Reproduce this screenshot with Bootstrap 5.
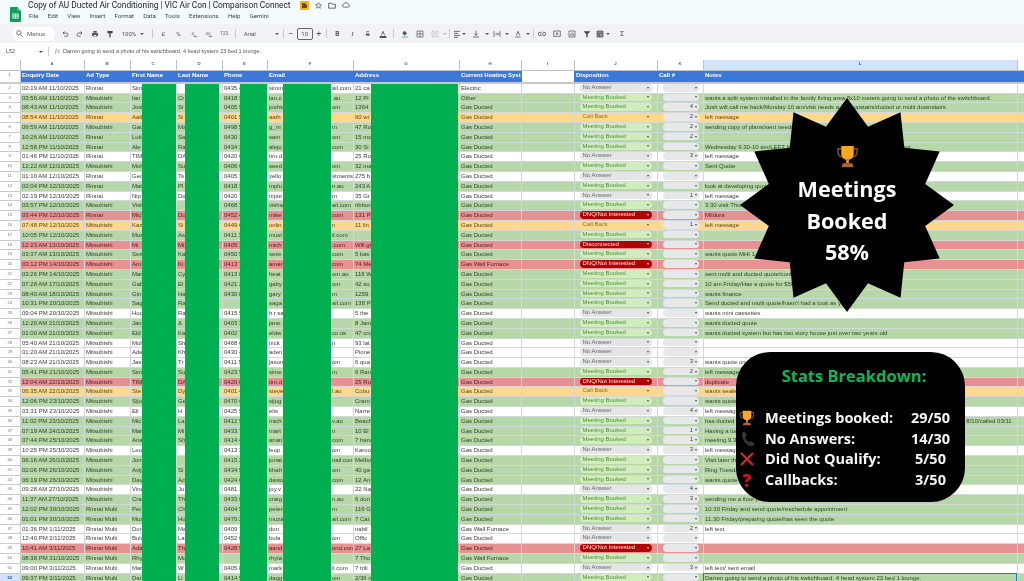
<!DOCTYPE html>
<html lang="en">
<head>
  <meta charset="UTF-8">
  <meta name="viewport" content="width=device-width, initial-scale=1.0">
  <title>Copy of AU Ducted Air Conditioning</title>
  <link href="https://cdn.jsdelivr.net/npm/bootstrap@5.3.3/dist/css/bootstrap.min.css" rel="stylesheet">
  <style>
    html, body { height: 581px; overflow: hidden; }
    body { background: #f4fbfc; font-family: "Liberation Sans", Arial, sans-serif; color: #222; }
    .shot { position: relative; width: 1024px; height: 581px; overflow: hidden; }
    .blurred { filter: blur(.5px); }

    /* title area */
    .top-bar { height: 24px; }
    .logo-box { width: 28px; padding: 2px 0 0 10px; }
    .doc-title { font: 400 8.3px/10px Roboto, sans-serif; color: #1f1f1f; margin-top: 0; white-space: nowrap; }
    .doc-icons { margin-left: 9px; gap: 6px; }
    .menu-row { font: 400 6.1px/8px Roboto, sans-serif; color: #444; margin-top: 2px; gap: 9.2px; padding-left: 1px; }

    /* toolbar */
    .tool-bar { height: 19px; background: #f0f2f5; padding-left: 12px; font: 400 6px/8px Roboto, sans-serif; color: #555; white-space: nowrap; }
    .menus-pill { width: 43px; height: 14px; background: #fff; border-radius: 7px; padding-left: 4px; gap: 4px; margin-right: 2px; color: #666; }
    .tb { width: 15.2px; flex: none; display: flex; justify-content: center; align-items: center; }
    .tb svg { width: 8px; height: 8px; }
    .tb-w { flex: none; display: flex; align-items: center; }
    .tb-sep { width: 1px; height: 9px; background: #c7c9cc; flex: none; margin: 0 3px; }
    .caret { width: 0; height: 0; border: 2px solid transparent; border-top: 2.5px solid #555; border-bottom: 0; flex: none; }
    .size-box { width: 16px; height: 12px; border: 1px solid #666; border-radius: 2px; text-align: center; line-height: 10px; margin: 0 2px; flex: none; }

    /* formula bar */
    .formula-bar { height: 17px; background: #fff; font: 400 5.5px/17px "Liberation Sans", sans-serif; color: #555; white-space: nowrap; }
    .cell-ref { width: 45px; padding-left: 6px; padding-right: 2px; }
    .fx { color: #888; font-style: italic; font-family: "Liberation Serif", serif; font-size: 7px; margin: 4px 3px 0 3px; border-left: 1px solid #ccc; padding-left: 6px; line-height: 9px; height: 9px; }

    /* sheet */
    .sheet-wrap { position: relative; background: #fff; height: 521px; overflow: hidden; }
    .table.sheet { table-layout: fixed; width: 1024px; margin: 0; border-collapse: collapse; font: 400 6px/9px "Liberation Sans", sans-serif; --bs-table-color: #333; --bs-table-bg: #fff; --bs-table-border-color: #d9dcdc; }
    .table.sheet > :not(caption) > * > * { padding: 0 1.5px; height: 9.8px; border: 1px solid #d5d8d8; border-width: 0 1px 1px 0; overflow: hidden; white-space: nowrap; color: inherit; line-height: 8.6px; }
    .table.sheet > :not(caption) > tr.col-heads > * { height: 10.6px; font-size: 4.4px; color: #666; text-align: center; background: #fff; border-color: #bfc3c4; }
    .table.sheet > :not(caption) > tr.col-heads > .on { background: #d3e3fd; color: #0b57d0; }
    .table.sheet > :not(caption) > tr.head-row > * { height: 12.4px; background: #3c78d8; color: #fff; font-weight: 700; border-color: #3c78d8; border-bottom: 2px solid #c6c9cb; border-top: 1px dashed #dfe8f7; padding-bottom: 1px; }
    .table.sheet > :not(caption) > tr.head-row > .gap-cell { background: #fff; border-top: 1px dashed #555; }
    .table.sheet > :not(caption) > tr > .num { background: #fff; font-size: 4.2px; color: #777; text-align: center; border-color: #c9cccd; padding: 0; }
    .table.sheet > :not(caption) > tr.head-row > .num { background: #fff; color: #777; font-weight: 400; border-color: #c9cccd; }
    .table.sheet > :not(caption) > tr > .num.on { background: #d3e3fd; color: #0b57d0; font-weight: 700; }
    .table.sheet > :not(caption) > tr > .picked { outline: 1.5px solid #1a73e8; outline-offset: -1px; }
    tr.st-m { --bs-table-bg: #b6d7a8; color: #2f4527; }
    tr.st-c { --bs-table-bg: #fdd98d; color: #5c4718; }
    tr.st-d { --bs-table-bg: #e69292; color: #552222; }
    tr.st-n { --bs-table-bg: #fff; color: #3c3c3c; }
    .table.sheet td.rt { text-align: right; }
    .frag { display: inline-block; width: 63px; }
    .far-note { margin-left: 232px; }

    .pill { display: flex; align-items: center; justify-content: space-between; height: 7.6px; border-radius: 4px; font-size: 6px; line-height: 7.6px; padding: 0 3px 0 3px; }
    .pill::after { content: ""; width: 0; height: 0; border: 1.7px solid transparent; border-top: 2px solid #444; border-bottom: 0; flex: none; }
    .disp { margin: 0 3px 0 3.5px; padding-left: 3px; }
    .disp-m { background: #d2edbd; color: #4f9040; }
    .disp-n { background: #e4e5e7; color: #666; }
    .disp-c { background: #fdd98d; color: #96702a; }
    .disp-d, .disp-x { background: #b10202; color: #fde3e3; }
    .disp-d::after, .disp-x::after { border-top-color: #fff; }
    .call { margin: 0 2px 0 3.5px; background: #e6e8ea; color: #444; padding-right: 2px; }
    .call span { margin-left: auto; margin-right: 2px; }

    /* redaction bars */
    .hide-bar { position: absolute; top: 23.5px; bottom: 0; background: #00b050; }
    .hb-1 { left: 142px; width: 34px; }
    .hb-2 { left: 185px; width: 34px; }
    .hb-3 { left: 240px; width: 27px; }
    .hb-4 { left: 283px; width: 48px; }
    .hb-5 { left: 371px; width: 87px; }

    /* overlays */
    .burst { position: absolute; left: 740px; top: 98px; width: 214px; height: 214px; color: #fff; font: 700 21.6px/31.6px "Open Sans", sans-serif; text-align: center; padding-top: 47px; filter: blur(.25px); }
    .burst > svg.shape { position: absolute; inset: 0; width: 214px; height: 214px; }
    .burst > div { position: relative; }
    .burst .cup { display: block; position: relative; margin: 0 auto 5px; width: 23px; height: 23px; }
    .stats-panel { position: absolute; left: 736px; top: 352px; width: 229px; height: 150px; background: #000; border-radius: 34px; color: #f5f5f5; font: 700 14.5px/20.6px "Open Sans", sans-serif; padding: 11px 0 0 3px; filter: blur(.25px); }
    .stats-title { color: #10b35a; font-size: 16.500px; line-height: 26px; text-align: center; margin-bottom: 19px; padding-left: 4px; }
    .stat-row { display: grid; grid-template-columns: 26px 138px 55px; align-items: center; white-space: nowrap; }
    .stat-row > :last-child { text-align: center; }
    .stat-ico { display: flex; justify-content: center; width: 16px; }
    .stat-ico svg { width: 16px; height: 16px; }
    .qmark { color: #c8102e; font-weight: 800; font-size: 18px; }
  </style>
</head>
<body>
<div class="shot">
  <div class="blurred">
    <div class="top-bar d-flex">
      <div class="logo-box">
        <svg width="11" height="15" viewBox="0 0 11 15"><path d="M1 0h6.500L11 3.500V14a1 1 0 0 1-1 1H1a1 1 0 0 1-1-1V1a1 1 0 0 1 1-1z" fill="#0f9d58"/><path d="M7.500 0L11 3.500H8a.5.5 0 0 1-.5-.5z" fill="#87ceac"/><path d="M2.500 6.500h6v5h-6z M3.300 7.300v1.300h1.800V7.300z M5.900 7.300v1.300h1.800V7.300z M3.300 9.400v1.300h1.800V9.400z M5.900 9.400v1.300h1.800V9.400z" fill="#fff" fill-rule="evenodd"/></svg>
      </div>
      <div>
        <div class="d-flex align-items-center">
          <div class="doc-title">Copy of AU Ducted Air Conditioning | VIC Air Con | Comparison Connect</div>
          <div class="doc-icons d-flex align-items-center">
            <svg width="9" height="9" viewBox="0 0 9 9"><rect width="9" height="9" rx="1" fill="#f4b400"/><path d="M2 2h3l2 2.500V7H2z" fill="#5f4a10"/></svg>
            <svg width="7" height="7" viewBox="0 0 24 24"><path d="M12 2l3 7 7 .6-5.400 4.700 1.700 7.200L12 17.600l-6.300 3.900 1.700-7.200L2 9.600 9 9z" fill="none" stroke="#555" stroke-width="2.400"/></svg>
            <svg width="8" height="7" viewBox="0 0 24 20"><path d="M2 3h8l2 3h10v12H2z" fill="none" stroke="#555" stroke-width="2.600"/></svg>
            <svg width="8" height="6" viewBox="0 0 24 17"><path d="M6 15a4.500 4.500 0 0 1-.5-9A7 7 0 0 1 19 6.500 4.300 4.300 0 0 1 19 15z" fill="none" stroke="#555" stroke-width="2.400"/></svg>
          </div>
        </div>
        <div class="menu-row d-flex"><span>File</span><span>Edit</span><span>View</span><span>Insert</span><span>Format</span><span>Data</span><span>Tools</span><span>Extensions</span><span>Help</span><span>Gemini</span></div>
      </div>
    </div>

    <div class="tool-bar d-flex align-items-center">
      <div class="menus-pill d-flex align-items-center">
        <svg width="7" height="7" viewBox="0 0 10 10"><circle cx="4" cy="4" r="3" fill="none" stroke="#555" stroke-width="1.100"/><path d="M6.300 6.300L9.500 9.500" stroke="#555" stroke-width="1.200"/></svg>
        <span>Menus</span>
      </div>
      <div class="tb"><svg viewBox="0 0 12 12"><path d="M3 4.500h5a2.500 2.500 0 0 1 0 5H5M3 4.500L5.200 2.300M3 4.500l2.200 2.200" fill="none" stroke="#444" stroke-width="1.100"/></svg></div>
      <div class="tb"><svg viewBox="0 0 12 12"><path d="M9 4.500H4a2.500 2.500 0 0 0 0 5h3M9 4.500L6.800 2.300M9 4.500L6.800 6.700" fill="none" stroke="#444" stroke-width="1.100"/></svg></div>
      <div class="tb"><svg viewBox="0 0 12 12"><path d="M3.500 1.500h5v2.500h-5zM1.500 4.500h9v4.500h-2v1.500h-5V9h-2z" fill="#555"/><path d="M4 7.500h4v2.500H4z" fill="#eee"/></svg></div>
      <div class="tb"><svg viewBox="0 0 12 12"><path d="M2 1.500h8v3.500H2zM5 5h2v6H5z" fill="#444"/></svg></div>
      <div class="tb-w" style="width:31px;padding-left:4px;gap:4px"><span>100%</span><i class="caret"></i></div>
      <i class="tb-sep"></i>
      <div class="tb"><span>£</span></div>
      <div class="tb"><span>%</span></div>
      <div class="tb"><svg viewBox="0 0 12 12"><text x="1" y="7" font-size="6.500" font-family="Liberation Sans" fill="#555">.0</text><path d="M6 9.500h5M7.500 8l-1.500 1.500L7.500 11" fill="none" stroke="#555" stroke-width=".9"/></svg></div>
      <div class="tb"><svg viewBox="0 0 12 12"><text x="0" y="7" font-size="6" font-family="Liberation Sans" fill="#555">.00</text><path d="M5 9.500h5M8.500 8l1.500 1.500L8.500 11" fill="none" stroke="#555" stroke-width=".9"/></svg></div>
      <div class="tb"><span style="font-size:4.600px">123</span></div>
      <i class="tb-sep"></i>
      <div class="tb-w" style="width:41px;padding-left:5px;justify-content:space-between;padding-right:1px"><span>Arial</span><i class="caret"></i></div>
      <i class="tb-sep"></i>
      <div class="tb-w" style="font-size:9px;width:8px;justify-content:center">−</div>
      <div class="size-box">10</div>
      <div class="tb-w" style="font-size:9px;width:8px;justify-content:center">+</div>
      <i class="tb-sep"></i>
      <div class="tb" style="font-weight:700;font-size:6.500px">B</div>
      <div class="tb" style="font-style:italic;font-family:'Liberation Serif',serif;font-size:7px">I</div>
      <div class="tb" style="text-decoration:line-through;font-size:6.500px">S</div>
      <div class="tb"><svg viewBox="0 0 12 12"><path d="M3.500 8L6 2l2.500 6" fill="none" stroke="#444" stroke-width="1.100"/><rect x="1" y="9.500" width="10" height="2" fill="#000"/></svg></div>
      <i class="tb-sep"></i>
      <div class="tb"><svg viewBox="0 0 12 12"><path d="M5 1l4 4-3.500 3.500L2 5z" fill="#555"/><rect x="1" y="9.500" width="10" height="2" fill="#8fc99b"/></svg></div>
      <div class="tb"><svg viewBox="0 0 12 12"><path d="M1.500 1.500h9v9h-9zM6 1.500v9M1.500 6h9" fill="none" stroke="#555" stroke-width="1"/></svg></div>
      <div class="tb"><svg viewBox="0 0 12 12"><path d="M1.500 1.500h3v9h-3zM7.500 1.500h3v9h-3z" fill="none" stroke="#bbb" stroke-width="1"/></svg></div>
      <i class="caret" style="border-top-color:#bbb;margin-right:1px"></i>
      <i class="tb-sep" style="margin:0 1px"></i>
      <div class="tb" style="width:11px"><svg viewBox="0 0 12 12"><path d="M1.500 2h9M1.500 5h6M1.500 8h9M1.500 11h6" stroke="#444" stroke-width="1.200"/></svg></div><i class="caret"></i>
      <div class="tb" style="width:19px"><svg viewBox="0 0 12 12"><path d="M6 1v7M3.500 5.500L6 8l2.500-2.500M1.500 10.500h9" fill="none" stroke="#444" stroke-width="1.100"/></svg></div><i class="caret"></i>
      <div class="tb" style="width:16px"><svg viewBox="0 0 12 12"><path d="M1.500 1.500v9M10.500 1.500v9M3.500 6h5M6.500 4l2 2-2 2" fill="none" stroke="#444" stroke-width="1"/></svg></div><i class="caret"></i>
      <div class="tb" style="width:17px"><svg viewBox="0 0 12 12"><path d="M3.500 8L6 2l2.500 6M2 10.500h8" fill="none" stroke="#444" stroke-width="1.100"/></svg></div><i class="caret"></i>
      <i class="tb-sep" style="margin:0 0 0 3px"></i>
      <div class="tb"><svg viewBox="0 0 12 12"><path d="M5 3.500H3a2.500 2.500 0 0 0 0 5h2M7 3.500h2a2.500 2.500 0 0 1 0 5H7M3.500 6h5" fill="none" stroke="#444" stroke-width="1.100"/></svg></div>
      <div class="tb"><svg viewBox="0 0 12 12"><path d="M1 1.500h10v8H1zM6 3.500v4M4 5.500h4" fill="none" stroke="#444" stroke-width="1"/></svg></div>
      <div class="tb"><svg viewBox="0 0 12 12"><path d="M1.500 1.500h9v9h-9zM4 8.500V6M6 8.500v-5M8 8.500V5" fill="none" stroke="#444" stroke-width="1"/></svg></div>
      <div class="tb"><svg viewBox="0 0 12 12"><path d="M1 2h10L7 6.500V11H5V6.500z" fill="#444"/></svg></div>
      <div class="tb" style="width:11px"><svg viewBox="0 0 12 12"><path d="M1.500 1.500h9v9h-9zM1.500 5h9M5 5v5.500" fill="#999" stroke="#444" stroke-width="1"/></svg></div><i class="caret"></i>
      <div class="tb" style="margin-left:5px"><span style="font-size:8px">Σ</span></div>
    </div>

    <div class="formula-bar d-flex">
      <div class="cell-ref d-flex justify-content-between align-items-center"><span>L52</span><i class="caret"></i></div>
      <span class="fx">fx</span>
      <span>Darren going to send a photo of his switchboard. 4 head system 23 bed 1 lounge.</span>
    </div>

    <div class="sheet-wrap">
      <table class="table sheet">
        <colgroup>
          <col style="width:20px"><col style="width:64px"><col style="width:46px"><col style="width:46px"><col style="width:46px"><col style="width:45px"><col style="width:86px"><col style="width:106px"><col style="width:62px"><col style="width:53px"><col style="width:83px"><col style="width:46px"><col style="width:314px"><col style="width:7px">
        </colgroup>
        <tbody id="sheetBody">
          <tr class="col-heads"><th></th><th>A</th><th>B</th><th>C</th><th>D</th><th>E</th><th>F</th><th>G</th><th>H</th><th>I</th><th>J</th><th>K</th><th class="on">L</th><th></th></tr>
          <tr class="head-row"><th class="num">1</th><th>Enquiry Date</th><th>Ad Type</th><th>First Name</th><th>Last Name</th><th>Phone</th><th>Email</th><th>Address</th><th>Current Heating Syst</th><th class="gap-cell"></th><th>Disposition</th><th>Call #</th><th>Notes</th><th></th></tr>
        </tbody>
      </table>
      <div class="hide-bar hb-1"></div>
      <div class="hide-bar hb-2"></div>
      <div class="hide-bar hb-3"></div>
      <div class="hide-bar hb-4"></div>
      <div class="hide-bar hb-5"></div>
    </div>
  </div>

  <div class="burst">
    <svg class="shape" viewBox="0 0 214 214"><polygon fill="#000" points="107,0 128,28.800 160.500,14.300 164.300,49.700 199.700,53.500 185.200,86 214,107 185.200,128 199.700,160.500 164.300,164.300 160.500,199.700 128,185.200 107,214 86,185.200 53.500,199.700 49.700,164.300 14.300,160.500 28.800,128 0,107 28.800,86 14.300,53.500 49.700,49.700 53.500,14.300 86,28.800"/></svg>
    <svg class="cup" viewBox="0 0 24 24"><path d="M6 4H2v3c0 3 2 5 5 5.500M18 4h4v3c0 3-2 5-5 5.500" fill="none" stroke="#6b4a12" stroke-width="1.800"/><path d="M5.500 1h13v8c0 4-3 6.500-6.500 6.500S5.500 13 5.500 9z" fill="#f7a823"/><rect x="10.500" y="15" width="3" height="4" fill="#d98a1c"/><path d="M7 19h10l1 4H6z" fill="#b5622d"/></svg>
    <div>Meetings<br>Booked<br>58%</div>
  </div>

  <div class="stats-panel">
    <div class="stats-title">Stats Breakdown:</div>
    <div class="stat-row">
      <span class="stat-ico"><svg viewBox="0 0 24 24"><path d="M6 4H2v3c0 3 2 5 5 5.500M18 4h4v3c0 3-2 5-5 5.500" fill="none" stroke="#6b4a12" stroke-width="1.800"/><path d="M5.500 1h13v8c0 4-3 6.500-6.500 6.500S5.500 13 5.500 9z" fill="#f7a823"/><rect x="10.500" y="15" width="3" height="4" fill="#d98a1c"/><path d="M7 19h10l1 4H6z" fill="#b5622d"/></svg></span>
      <span>Meetings booked:</span><span>29/50</span>
    </div>
    <div class="stat-row">
      <span class="stat-ico"><svg viewBox="0 0 24 24"><path d="M5 2l4-1 3 6-3 2c1 3 3 6 6 8l3-2 5 4-2 4c-9 1-19-11-16-21z" fill="#30363b"/></svg></span>
      <span>No Answers:</span><span>14/30</span>
    </div>
    <div class="stat-row">
      <span class="stat-ico"><svg viewBox="0 0 24 24"><path d="M3 3l18 18M21 3L3 21" stroke="#d9272e" stroke-width="3"/></svg></span>
      <span>Did Not Qualify:</span><span>5/50</span>
    </div>
    <div class="stat-row">
      <span class="stat-ico qmark">?</span>
      <span>Callbacks:</span><span>3/50</span>
    </div>
  </div>
</div>

<script>
  // date|ad|first|last|phone|email|emailEnd|address|heating|status|call|notes
  const R = 'Rinnai', M = 'Mitsubishi', RM = 'Rinnai Multi', G = 'Gas Ducted', W = 'Gas Wall Furnace';
  const rows = [
    ['02:19 AM 11/10/2025',R,'Sim','','0435 4','simm','ail.com','21 ca','Electric','n','',''],
    ['03:56 AM 11/10/2025',M,'Ian','Cr','0418 3','ian.c','.au','12 Pi','Other','m','','wants a split system installed in the family living area 8x10 meters going to send a photo of the switchboard.'],
    ['08:43 AM 11/10/2025',M,'Josh','Si','0405 5','joshs','om','1364',G,'m','4','Josh will call me back/Monday 10 am/visit needs a mini upstairs/ducted or multi downstairs'],
    ['08:54 AM 11/10/2025',R,'Aath','Si','0401 5','aath','','60 wi',G,'c','2','left message'],
    ['09:59 AM 11/10/2025',M,'Gau','Ma','0498 5','g_m','m','47 Ro',G,'m','2','sending copy of plans/sent needs'],
    ['10:26 AM 11/10/2025',R,'Luk','Sa','0430 1','sam','om','15 mo',G,'m','2',''],
    ['12:58 PM 11/10/2025',R,'Ale','Ra','0434 3','alejo','com','30 Si',G,'m','','Wednesday 9.30-10 am/LEFT MESSAGE/sent quote for multi and ducted upt'],
    ['01:46 PM 11/10/2025',R,'TIM','DA','0420 6','tim.d','','25 Ro',G,'n','3','left message'],
    ['12:22 AM 12/10/2025',M,'Moh','Su','0406 6','seed','om','32 ma',G,'m','','Sent Quote'],
    ['01:10 AM 12/10/2025',R,'Geo','Ts','0405 3','yello','stments','275 b',G,'n','',''],
    ['02:04 PM 12/10/2025',R,'Mat','Pl','0418 3','mplu','n.au','243 A',G,'m','','look at developing quote'],
    ['02:19 PM 12/10/2025',R,'Nip','Do','0420 7','nipur','m','35 Gr',G,'n','1','left message'],
    ['03:57 PM 12/10/2025',M,'Vish','','0468 3','visha','ail.com','ribbon',G,'m','','3.30 visit Thursday'],
    ['03:44 PM 12/10/2025',R,'Mic','Do','0452 4','mike','com','131 P',G,'d','','Mildura'],
    ['07:48 PM 12/10/2025',M,'Kaz','Si','0449 6','onlin','n','11 lin',G,'c','1','left message'],
    ['10:05 PM 12/10/2025',M,'Mus','As','0411 3','must','il.com','',G,'m','',''],
    ['12:23 AM 13/10/2025',M,'Mi','Mi','0405 1','mich','.com','Will gi',G,'x','',''],
    ['03:37 AM 13/10/2025',M,'Sez','Ka','0450 5','seze','com','5 kas',G,'m','','wants quote MHI 1'],
    ['03:12 PM 14/10/2025',M,'Am','Ki','0413 7','aman','com','74 Me',W,'d','',''],
    ['03:26 PM 14/10/2025',M,'Mar','Cy','0413 8','heat','om.au','116 W',G,'m','','sent multi and ducted quote/confirmed'],
    ['07:28 AM 17/10/2025',M,'Gab','El','0421 2','gaby','om','42 su',G,'m','','10 am Friday/Has a quote for $50k'],
    ['08:40 AM 18/10/2025',M,'Gin','Ha','0430 8','gary','m','1259',G,'m','','wants finance'],
    ['10:31 PM 20/10/2025',M,'Sag','Ra','      4','saga','ail.com','138 P',G,'m','',"Send ducted and multi quote/hasn't had a look as yet"],
    ['09:04 PM 20/10/2025',M,'Hoo','Ra','0415 5','h.r.sa','','5 the',G,'n','','wants mini cassettes'],
    ['12:20 AM 21/10/2025',M,'Jan','&amp;','0403 3','jane.','','8 Jam',G,'m','','wants ducted quote'],
    ['01:00 AM 21/10/2025',M,'Eld','Ka','0402 7','eldw','co.uk','47 cro',G,'m','','wants ducted system but has two story house just over two years old'],
    ['05:40 AM 21/10/2025',M,'Moh','Sh','0468 6','nick','n','93 lat',G,'n','',''],
    ['01:20 AM 21/10/2025',M,'Ade','Kh','0430 4','aden','','Pione',G,'n','',''],
    ['08:23 AM 21/10/2025',M,'Jas','Tr','0411 5','jason','om','6 qua',G,'n','3','wants quote on 7'],
    ['05:41 PM 21/10/2025',M,'Sim','Su','0423 5','sime','m','6 Ran',G,'m','2','left message/'],
    ['12:04 AM 22/10/2025',M,'TIM','DA','0420 6','tim.d','','25 Ro',G,'d','','duplicate'],
    ['06:35 AM 22/10/2025',M,'Ste','Dy','0401 4','steve','l.au','Cobu',G,'c','','wants sealed'],
    ['12:06 PM 23/10/2025',M,'Sijo','Ge','0470 6','sijog','','Cram',G,'m','','wants quote'],
    ['03:31 PM 23/10/2025',M,'Eli','H','0425 5','elis','','Narre',G,'n','4','left message'],
    ['11:02 PM 23/10/2025',M,'Mic','La','0412 5','mich','v.au','Beach',G,'m','','has ducted<span class="far-note">8/10/called 03/11</span>'],
    ['07:19 AM 24/10/2025',M,'Mar','Mi','0433 7','mart','n','10 El',G,'m','1','Having a look'],
    ['07:44 PM 25/10/2025',M,'Ana','Sh','0414 4','anan','com','7 harv',G,'m','1','meeting 9.30'],
    ['10:25 PM 25/10/2025',M,'Leo','','0413 2','leop','om','Karoo',G,'n','3','left message'],
    ['06:16 AM 26/10/2025',M,'Jon','','0415 2','jonat','nail.com','Melbo',G,'m','','Visit later this'],
    ['02:06 PM 26/10/2025',M,'Avij','Si','0434 5','khah','om','40 ga',G,'m','','Ring Tuesday'],
    ['06:19 PM 26/10/2025',M,'Dav','Ac','0424 6','dawo','com','12 An',G,'m','','wants quote d'],
    ['09:28 AM 27/10/2025',M,'Vinu','Jo','0481 1','joy.v','','22 Na',G,'n','4',''],
    ['11:37 AM 27/10/2025',M,'Cra','Th','0433 6','craig','n.au','6 don',G,'m','3','sending me a floor plan'],
    ['12:02 PM 30/10/2025',RM,'Pet','Ch','0404 5','peter','m','116 G',G,'m','','10.30 Friday and send quote/reschedule appointment'],
    ['01:01 PM 30/10/2025',RM,'Muz','Hu','0470 2','muza','ail.com','7 Cat',G,'m','','11.30 Friday/preparing quote/has seen the quote'],
    ['01:36 PM 1/11/2025',RM,'Don','Ma','0409 7','don','','nabil',W,'n','2','left text'],
    ['12:40 PM 2/11/2025',RM,'Bula','La','0452 0','bula','om','Offic',G,'n','',''],
    ['10:41 AM 3/11/2025',RM,'Ada','Th','0428 5','aand','ond.com','27 La',G,'d','',''],
    ['08:38 PM 31/10/2025',RM,'Rhy','Mo','      4','rhyla','','7 Tho',W,'m','',''],
    ['09:00 PM 3/11/2025',RM,'Mar','W','0405 8','mark','il.com','7 trili',G,'n','3','left text/ sent email'],
    ['09:37 PM 3/11/2025',RM,'Dar','Li','0414 5','dagg','om','2/36 n',G,'m','','Darren going to send a photo of his switchboard. 4 head system 23 bed 1 lounge.']
  ];
  const LABEL = { m: 'Meeting Booked', n: 'No Answer', c: 'Call Back', d: 'DNQ/Not Interested', x: 'Disconnected' };

  const body = document.getElementById('sheetBody');
  rows.forEach((r, i) => {
    const n = i + 2, last = i === rows.length - 1;
    const phone = r[4].trim().length === 1 ? `<td class="rt">${r[4].trim()}</td>` : `<td>${r[4]}</td>`;
    const tr = document.createElement('tr');
    tr.className = 'st-' + (r[9] === 'x' ? 'd' : r[9]);
    tr.innerHTML = `<td class="num${last ? ' on' : ''}">${n}</td><td>${r[0]}</td><td>${r[1]}</td><td>${r[2]}</td><td>${r[3]}</td>${phone}` +
      `<td><span class="frag">${r[5]}</span>${r[6]}</td><td>${r[7]}</td><td>${r[8]}</td><td></td>` +
      `<td><div class="pill disp disp-${r[9]}">${LABEL[r[9]]}</div></td>` +
      `<td><div class="pill call"><span>${r[10]}</span></div></td>` +
      `<td class="${last ? 'picked' : ''}">${r[11]}</td><td></td>`;
    body.appendChild(tr);
  });
</script>
<script src="https://cdn.jsdelivr.net/npm/bootstrap@5.3.3/dist/js/bootstrap.bundle.min.js"></script>
</body>
</html>
